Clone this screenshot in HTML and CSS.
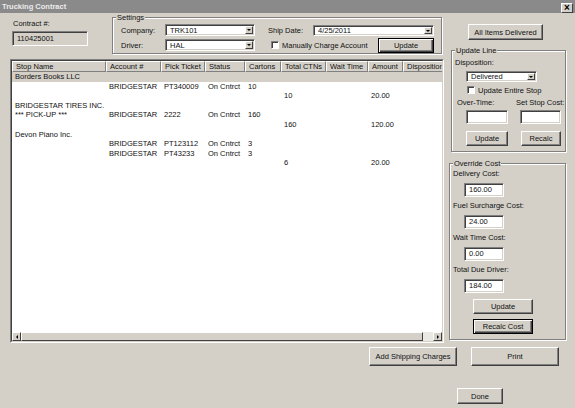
FILE: index.html
```html
<!DOCTYPE html>
<html lang="en">
<head>
    <meta charset="UTF-8">
    <title>Trucking Contract</title>
    <link rel="stylesheet" href="styles.css">
</head>
<body>
<div class="window">

    <div class="titlebar">
        <span class="title">Trucking Contract</span>
        <span class="close">×</span>
    </div>

    <div class="content">

        <!-- Left side: header fields + stop list -->
        <div class="left">
            <div class="top">
                <div class="contract">
                    <div class="lbl">Contract #:</div>
                    <div class="textbox readonly">110425001</div>
                </div>

                <div class="group settings">
                    <div class="legend">Settings</div>
                    <div class="settings-grid">
                        <span>Company:</span>
                        <div class="combo"><span>TRK101</span><i class="drop"></i></div>
                        <span class="ship">Ship Date:</span>
                        <div class="combo date"><span>4/25/2011</span><i class="drop"></i></div>
                        <span>Driver:</span>
                        <div class="combo"><span>HAL</span><i class="drop"></i></div>
                        <div class="opts">
                            <span class="check"></span>
                            <span>Manually Charge Account</span>
                            <button class="btn btn-default">Update</button>
                        </div>
                    </div>
                </div>
            </div>

            <div class="list">
                <div class="list-inner">
                    <div class="cols head">
                        <span>Stop Name</span><span>Account #</span><span>Pick Ticket</span><span>Status</span><span>Cartons</span><span>Total CTNs</span><span>Wait Time</span><span>Amount</span><span>Disposition</span>
                    </div>
                    <div class="rows">
                        <div class="cols row sel"><span>Borders Books LLC</span></div>
                        <div class="cols row"><span></span><span>BRIDGESTAR</span><span>PT340009</span><span>On Cntrct</span><span>10</span></div>
                        <div class="cols row"><span></span><span></span><span></span><span></span><span></span><span>10</span><span></span><span>20.00</span></div>
                        <div class="cols row"><span>BRIDGESTAR TIRES INC.</span></div>
                        <div class="cols row"><span>*** PICK-UP ***</span><span>BRIDGESTAR</span><span>2222</span><span>On Cntrct</span><span>160</span></div>
                        <div class="cols row"><span></span><span></span><span></span><span></span><span></span><span>160</span><span></span><span>120.00</span></div>
                        <div class="cols row"><span>Devon Piano Inc.</span></div>
                        <div class="cols row"><span></span><span>BRIDGESTAR</span><span>PT123112</span><span>On Cntrct</span><span>3</span></div>
                        <div class="cols row"><span></span><span>BRIDGESTAR</span><span>PT43233</span><span>On Cntrct</span><span>3</span></div>
                        <div class="cols row"><span></span><span></span><span></span><span></span><span></span><span>6</span><span></span><span>20.00</span></div>
                    </div>
                    <div class="hscroll">
                        <span class="arrow left-arrow"></span>
                        <span class="thumb"></span>
                        <span class="track"></span>
                        <span class="arrow right-arrow"></span>
                    </div>
                </div>
            </div>
        </div>

        <!-- Right side: line update + cost override -->
        <div class="right">
            <button class="btn btn-all">All Items Delivered</button>

            <div class="group update-line">
                <div class="legend">Update Line</div>
                <div class="lbl disp-lbl">Disposition:</div>
                <div class="combo disp"><span>Delivered</span><i class="drop"></i></div>
                <div class="check-row">
                    <span class="check"></span>
                    <span>Update Entire Stop</span>
                </div>
                <div class="cost-grid">
                    <span class="lbl ot-lbl">Over-Time:</span>
                    <span class="lbl stop-lbl">Set Stop Cost:</span>
                    <div class="textbox"></div>
                    <div class="textbox"></div>
                    <button class="btn">Update</button>
                    <button class="btn">Recalc</button>
                </div>
            </div>

            <div class="group override">
                <div class="legend">Override Cost</div>
                <div class="lbl first">Delivery Cost:</div>
                <div class="textbox">160.00</div>
                <div class="lbl">Fuel Surcharge Cost:</div>
                <div class="textbox">24.00</div>
                <div class="lbl">Wait Time Cost:</div>
                <div class="textbox">0.00</div>
                <div class="lbl">Total Due Driver:</div>
                <div class="textbox">184.00</div>
                <button class="btn btn-update">Update</button>
                <button class="btn btn-default btn-recalc">Recalc Cost</button>
            </div>
        </div>
    </div>

    <div class="footer">
        <div class="footer-row">
            <button class="btn btn-foot">Add Shipping Charges</button>
            <button class="btn btn-foot">Print</button>
        </div>
        <button class="btn btn-done">Done</button>
    </div>

</div>
</body>
</html>
```

FILE: styles.css
```css
/* Classic dialog look */
* {
    box-sizing: border-box;
}

body {
    margin: 0;
    background: #d4d0c8;
    font-family: "Liberation Sans", Arial, sans-serif;
    font-size: 7.5px;
    color: #111;
}

.window {
    width: 575px;
    height: 408px;
    display: flex;
    flex-direction: column;
}

/* Title bar */
.titlebar {
    height: 13px;
    background: #8a8a8a;
    display: flex;
    align-items: center;
    justify-content: space-between;
    padding: 0 2px 0 2px;
}

.title {
    color: #ececec;
    font-weight: bold;
    font-size: 7.5px;
}

.close {
    width: 12px;
    height: 10px;
    margin-top: 2px;
    background: #d4d0c8;
    border: 1px solid;
    border-color: #fff #404040 #404040 #fff;
    color: #000;
    font-size: 10px;
    font-weight: bold;
    line-height: 7px;
    text-align: center;
}

/* Main two column area */
.content {
    display: grid;
    grid-template-columns: 434px 118px;
    column-gap: 5px;
    padding-left: 10px;
    height: 330px;
}

.left {
    display: flex;
    flex-direction: column;
}

.top {
    display: flex;
    gap: 24px;
    height: 46px;
}

.lbl {
    line-height: 9px;
    white-space: nowrap;
}

.contract {
    width: 78px;
    padding-left: 2px;
}

.contract .lbl {
    margin-top: 6px;
    padding-left: 1px;
}

/* Sunken edit box */
.textbox {
    height: 14px;
    background: #fff;
    border: 1px solid;
    border-color: #808080 #fff #fff #808080;
    box-shadow: inset 1px 1px #404040, inset -1px -1px #d4d0c8;
    padding-left: 4px;
    line-height: 12px;
}

.contract .textbox {
    margin-top: 3px;
    height: 15px;
    line-height: 13px;
}

.readonly {
    background: #d4d0c8;
}

/* Group boxes */
.group {
    border: 1px solid #808080;
    box-shadow: inset 1px 1px #fff, 1px 1px #fff;
    display: flex;
    flex-direction: column;
    align-items: flex-start;
}

.legend {
    margin: -5px 0 0 3px;
    padding: 0 1px;
    background: #d4d0c8;
    line-height: 9px;
}

.settings {
    width: 330px;
    height: 37px;
    margin-top: 4px;
}

.settings-grid {
    display: grid;
    grid-template-columns: 44px 90px 58px 121px;
    grid-template-rows: 12px 12px;
    row-gap: 3px;
    margin: 2px 0 0 8px;
    align-items: center;
}

.settings-grid .ship {
    padding-left: 13px;
}

.opts {
    grid-column: 3 / 5;
    display: flex;
    align-items: center;
    padding-left: 16px;
}

.opts .btn {
    margin-left: auto;
    width: 56px;
    height: 15px;
}

/* Check box */
.check {
    width: 8px;
    height: 8px;
    margin-right: 3px;
    background: #fff;
    border: 1px solid;
    border-color: #808080 #fff #fff #808080;
    box-shadow: inset 1px 1px #404040;
}

/* Drop-down */
.combo {
    display: flex;
    align-items: center;
    height: 12px;
    background: #fff;
    border: 1px solid;
    border-color: #808080 #fff #fff #808080;
    box-shadow: inset 1px 1px #404040, inset -1px -1px #d4d0c8;
    padding: 1px 1px 1px 4px;
}

.combo span {
    flex: 1;
    white-space: nowrap;
}

.combo.date {
    height: 11px;
    margin-top: 1px;
}

.drop {
    width: 8px;
    height: 100%;
    background: #d4d0c8;
    border: 1px solid;
    border-color: #fff #404040 #404040 #fff;
    display: flex;
    align-items: center;
    justify-content: center;
}

.drop::after {
    content: "";
    border-left: 2px solid transparent;
    border-right: 2px solid transparent;
    border-top: 2px solid #000;
}

/* Stop list */
.list {
    height: 284px;
    border: 1px solid;
    border-color: #808080 #fff #fff #808080;
}

.list-inner {
    height: 100%;
    border: 1px solid;
    border-color: #404040 #d4d0c8 #d4d0c8 #404040;
    background: #fff;
    display: flex;
    flex-direction: column;
    overflow: hidden;
}

.cols {
    display: grid;
    grid-template-columns: 94px 55px 44px 40px 36px 45px 42px 35px 60px;
    width: 451px;
    flex-shrink: 0;
}

.head {
    height: 11px;
}

.head span {
    background: #d4d0c8;
    border: 1px solid;
    border-color: #fff #808080 #808080 #fff;
    line-height: 9px;
    padding-left: 3px;
    white-space: nowrap;
    overflow: hidden;
}

.rows {
    flex: 1;
}

.row {
    height: 9.6px;
}

.row span {
    padding-left: 3px;
    line-height: 9.6px;
    white-space: nowrap;
}

.row.sel {
    background: #d4d0c8;
}

.hscroll {
    height: 9px;
    display: flex;
    background: #ebe9e4;
}

.hscroll .arrow,
.hscroll .thumb {
    background: #d4d0c8;
    border: 1px solid;
    border-color: #fff #404040 #404040 #fff;
}

.arrow {
    width: 9px;
    display: flex;
    align-items: center;
    justify-content: center;
}

.left-arrow::after {
    content: "";
    border-top: 2px solid transparent;
    border-bottom: 2px solid transparent;
    border-right: 2px solid #000;
}

.right-arrow::after {
    content: "";
    border-top: 2px solid transparent;
    border-bottom: 2px solid transparent;
    border-left: 2px solid #000;
}

.thumb {
    width: 402px;
}

.track {
    flex: 1;
}

/* Buttons */
.btn {
    font: inherit;
    color: #111;
    background: #d4d0c8;
    border: 1px solid;
    border-color: #fff #404040 #404040 #fff;
    box-shadow: inset -1px -1px #808080;
    padding: 0;
    cursor: pointer;
}

.btn-default {
    border-color: #000;
    box-shadow: inset 1px 1px #fff, inset -1px -1px #404040, inset -2px -2px #808080;
}

/* Right column */
.right {
    display: flex;
    flex-direction: column;
    align-items: flex-start;
}

.btn-all {
    margin: 11px 0 0 19px;
    width: 75px;
    height: 16px;
}

.update-line {
    margin: 10px 0 0 2px;
    width: 115px;
    height: 102px;
}

.disp-lbl {
    margin: 2.5px 0 0 3px;
}

.combo.disp {
    margin: 4.5px 0 0 14px;
    width: 71px;
    height: 11px;
}

.check-row {
    display: flex;
    align-items: center;
    margin: 3.5px 0 0 15px;
    line-height: 9px;
}

.cost-grid {
    display: grid;
    grid-template-columns: 42px 41px;
    column-gap: 12px;
    margin: 3px 0 0 14px;
}

.ot-lbl {
    margin-left: -9px;
}

.stop-lbl {
    margin-left: -4px;
}

.cost-grid .textbox {
    margin-top: 3.5px;
}

.cost-grid .btn {
    margin-top: 7px;
    height: 15px;
}

.cost-grid .btn:last-child {
    margin-left: 1px;
}

.override {
    margin-top: 11px;
    width: 117px;
    height: 177px;
}

.override .lbl {
    margin: 4.5px 0 0 3px;
}

.override .lbl.first {
    margin-top: 1px;
}

.override .textbox {
    margin: 4.5px 0 0 14px;
    width: 40px;
}

.btn-update,
.btn-recalc {
    margin-left: 23px;
    width: 60px;
    height: 15px;
}

.btn-update {
    margin-top: 6px;
}

.btn-recalc {
    margin-top: 5px;
}

/* Footer buttons */
.footer {
    display: flex;
    flex-direction: column;
    align-items: flex-end;
}

.footer-row {
    display: flex;
    gap: 14px;
    margin: 4px 16px 0 0;
}

.btn-foot {
    width: 88px;
    height: 19px;
}

.btn-done {
    margin: 22px 72px 0 0;
    width: 46px;
    height: 16px;
}
```
